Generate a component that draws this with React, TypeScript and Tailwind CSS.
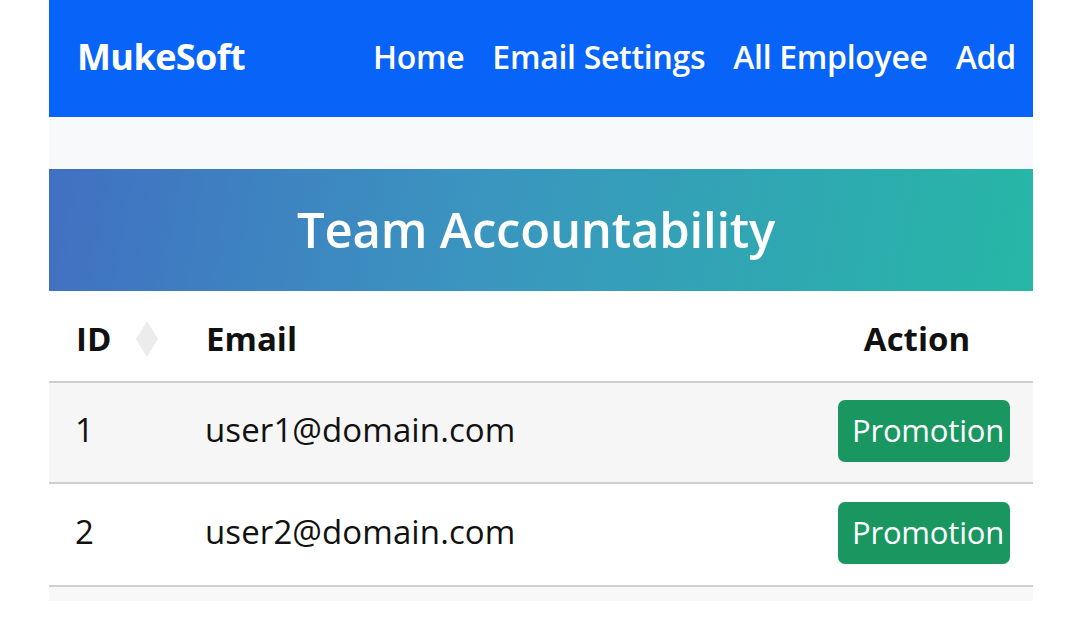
import React from 'react';

// 员工列表数据
const rows = [
  { id: 1, email: 'user1@domain.com' },
  { id: 2, email: 'user2@domain.com' },
];

const links = ['Home', 'Email Settings', 'All Employee', 'Add'];

function SortIcon() {
  return (
    <svg width="24" height="36" viewBox="0 0 24 36" className="ml-[24px]">
      <polygon points="12,0 23,18 12,36 1,18" fill="#ececec" />
    </svg>
  );
}

export default function App() {
  return (
    <div className="min-h-screen bg-white font-['Open_Sans','Noto_Sans',sans-serif]">
      <div className="mx-[49px] w-[984px]">
        {/* 导航栏 */}
        <nav className="h-[117px] bg-[#0864f9] flex items-center pl-[28px] pb-[3px] overflow-hidden">
          <span className="text-white font-bold text-[36px] tracking-[-0.6px] w-[296px]">MukeSoft</span>
          <ul className="flex items-center gap-[28px]">
            {links.map((l) => (
              <li key={l} className="text-white font-semibold text-[32px] tracking-[-0.3px] whitespace-nowrap">
                {l}
              </li>
            ))}
          </ul>
        </nav>

        <div className="h-[52px] bg-[#f8f9fa]" />

        {/* 标题 */}
        <div className="h-[122px] flex items-center justify-center pr-[10px] bg-[linear-gradient(100deg,#4170c2_0%,#3a96bf_45%,#26b7a6_100%)]">
          <h2 className="text-white font-semibold text-[49px] tracking-[-0.2px]">Team Accountability</h2>
        </div>

        {/* 表格 */}
        <div className="text-[#111]">
          <div className="h-[92px] flex items-center border-b-2 border-[#cfcfcf] bg-white pt-[5px]">
            <div className="w-[157px] pl-[27px] flex items-center font-bold text-[33px]">
              ID
              <SortIcon />
            </div>
            <div className="flex-1 font-bold text-[33px]">Email</div>
            <div className="w-[228px] text-center font-bold text-[33px] pr-[4px]">Action</div>
          </div>
          {rows.map((r, i) => (
            <div
              key={r.id}
              className={
                'flex items-center border-b-2 border-[#cfcfcf] ' +
                (i === 0 ? 'h-[101px] bg-[#f6f6f6]' : 'h-[103px] bg-white')
              }
            >
              <div className="w-[156px] pl-[26px] text-[33px] pb-[5px]">{r.id}</div>
              <div className="flex-1 text-[33px] pb-[5px] tracking-[0.1px]">{r.email}</div>
              <div className="w-[228px] flex justify-end pr-[23px] pb-[4px]">
                <button className="h-[62px] w-[172px] rounded-[7px] bg-[#1a9661] text-white text-[31px] text-left pl-[14px] tracking-[-0.2px] whitespace-nowrap overflow-hidden">
                  Promotion
                </button>
              </div>
            </div>
          ))}
          <div className="h-[14px] bg-[#f8f8f8]" />
        </div>
      </div>
    </div>
  );
}
